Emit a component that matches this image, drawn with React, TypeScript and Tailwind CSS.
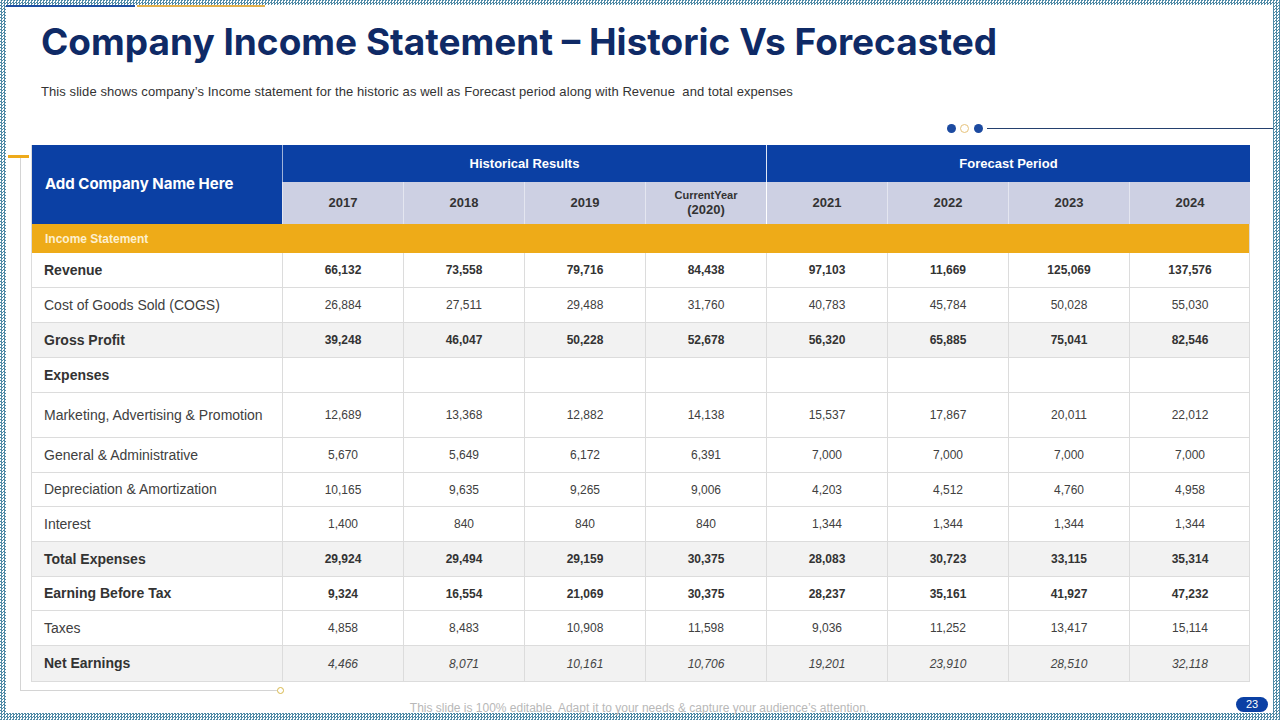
import React from "react";

type Row = { label: string; values: string[]; kind: "bold" | "normal" | "shade" | "empty" | "italic"; h: string };

const rows: Row[] = [
  { label: "Revenue", values: ["66,132", "73,558", "79,716", "84,438", "97,103", "11,669", "125,069", "137,576"], kind: "bold", h: "h-[35px]" },
  { label: "Cost of Goods Sold (COGS)", values: ["26,884", "27,511", "29,488", "31,760", "40,783", "45,784", "50,028", "55,030"], kind: "normal", h: "h-[35px]" },
  { label: "Gross Profit", values: ["39,248", "46,047", "50,228", "52,678", "56,320", "65,885", "75,041", "82,546"], kind: "shade", h: "h-[35px]" },
  { label: "Expenses", values: ["", "", "", "", "", "", "", ""], kind: "empty", h: "h-[35px]" },
  { label: "Marketing, Advertising & Promotion", values: ["12,689", "13,368", "12,882", "14,138", "15,537", "17,867", "20,011", "22,012"], kind: "normal", h: "h-[45px]" },
  { label: "General & Administrative", values: ["5,670", "5,649", "6,172", "6,391", "7,000", "7,000", "7,000", "7,000"], kind: "normal", h: "h-[35px]" },
  { label: "Depreciation & Amortization", values: ["10,165", "9,635", "9,265", "9,006", "4,203", "4,512", "4,760", "4,958"], kind: "normal", h: "h-[34px]" },
  { label: "Interest", values: ["1,400", "840", "840", "840", "1,344", "1,344", "1,344", "1,344"], kind: "normal", h: "h-[35px]" },
  { label: "Total Expenses", values: ["29,924", "29,494", "29,159", "30,375", "28,083", "30,723", "33,115", "35,314"], kind: "shade", h: "h-[35px]" },
  { label: "Earning Before Tax", values: ["9,324", "16,554", "21,069", "30,375", "28,237", "35,161", "41,927", "47,232"], kind: "bold", h: "h-[34px]" },
  { label: "Taxes", values: ["4,858", "8,483", "10,908", "11,598", "9,036", "11,252", "13,417", "15,114"], kind: "normal", h: "h-[35px]" },
  { label: "Net Earnings", values: ["4,466", "8,071", "10,161", "10,706", "19,201", "23,910", "28,510", "32,118"], kind: "italic", h: "h-[35px]" },
];

const years = ["2017", "2018", "2019", "", "2021", "2022", "2023", "2024"];

export default function App() {
  return (
    <div
      className="w-[1280px] h-[720px] overflow-hidden pt-[5px] pl-[6px] pr-[7px] pb-[7px] bg-[repeating-conic-gradient(#4f8aa6_0_25%,#ffffff_0_50%)] bg-size-[3px_3px]"
      style={{ fontFamily: "'Liberation Sans', Arial, sans-serif" }}
    >
      <div className="relative w-full h-full bg-white flex flex-col">
        {/* top lines */}
        <div className="flex h-[2px] gap-[2px]">
          <div className="w-[129px] bg-[#1e4fa3]" />
          <div className="w-[128px] bg-[#e3b04b]" />
        </div>

        {/* title */}
        <h1
          className="pl-[35px] mt-[12px] text-[37px] leading-[46px] font-bold text-[#0f2a66]"
          style={{ fontFamily: "Inter, 'Noto Sans', sans-serif" }}
        >
          Company Income Statement – Historic Vs Forecasted
        </h1>

        {/* subtitle */}
        <p className="pl-[35px] mt-[19px] text-[13px] leading-[15px] tracking-[0.08px] text-[#333333] whitespace-pre">
          This slide shows company’s Income statement for the historic as well as Forecast period along with Revenue  and total expenses
        </p>

        {/* dots */}
        <div className="flex items-center mt-[24px] h-[10px]">
          <div className="ml-[941px] w-[9px] h-[9px] rounded-full bg-[#1c4aa0]" />
          <div className="ml-[4px] w-[9px] h-[9px] rounded-full border border-[#e6c27a] bg-white" />
          <div className="ml-[5px] w-[9px] h-[9px] rounded-full bg-[#1c4aa0]" />
          <div className="ml-[4px] flex-1 h-px bg-[#24406e]" />
        </div>

        {/* table area */}
        <div className="relative mt-[12px] pl-[25px]">
          {/* left decoration */}
          <div className="absolute left-[2px] top-[10px] w-[21px] h-[3px] bg-[#eeaa1a]" />
          <div className="absolute left-[14px] top-[13px] w-px h-[532px] bg-[#d4d4d4]" />
          <div className="absolute left-[14px] top-[545px] w-[257px] h-px bg-[#d4d4d4]" />
          <div className="absolute left-[271px] top-[542px] w-[7px] h-[7px] rounded-full border border-[#d8b84a] bg-white" />

          <div className="w-[1219px] border border-[#dcdcdc] border-t-0">
            {/* header */}
            <div className="grid grid-cols-[250px_repeat(8,121px)] grid-rows-[37px_42px]">
              <div
                className="row-span-2 bg-[#0b40a4] flex items-center pl-[13px] text-white text-[15px] font-bold"
                style={{ fontFamily: "Inter, 'Noto Sans', sans-serif" }}
              >
                Add Company Name Here
              </div>
              <div className="col-span-4 bg-[#0b40a4] border-l border-[#9fb3da] flex items-center justify-center text-white text-[13px] font-bold">
                Historical Results
              </div>
              <div className="col-span-4 bg-[#0b40a4] border-l border-[#dfe6f5] flex items-center justify-center text-white text-[13px] font-bold">
                Forecast Period
              </div>
              {years.map((y, i) => (
                <div
                  key={i}
                  className={`bg-[#cdd0e3] flex flex-col items-center justify-center text-[#333333] border-l ${i === 4 ? "border-[#ffffff]" : "border-[#e4e6f0]"}`}
                >
                  {y ? (
                    <span className="text-[13px] font-bold">{y}</span>
                  ) : (
                    <>
                      <span className="text-[11px] font-bold leading-[13px]">CurrentYear</span>
                      <span className="text-[13px] font-bold leading-[16px]">(2020)</span>
                    </>
                  )}
                </div>
              ))}
            </div>

            {/* income statement band */}
            <div className="h-[29px] bg-[#eeab18] flex items-center pl-[13px] text-[12px] font-bold text-[#fdf0cf]">
              Income Statement
            </div>

            {rows.map((r, ri) => {
              const shaded = r.kind === "shade" || r.kind === "italic";
              const boldLabel = r.kind !== "normal";
              return (
                <div
                  key={ri}
                  className={`grid grid-cols-[250px_repeat(8,121px)] ${r.h} ${shaded ? "bg-[#f2f2f2]" : "bg-white"} ${ri < rows.length - 1 ? "border-b border-[#dcdcdc]" : ""}`}
                >
                  <div
                    className={`flex items-center pl-[12px] ${boldLabel ? "text-[14px] font-bold text-[#333333]" : "text-[14px] text-[#404040]"}`}
                  >
                    {r.label}
                  </div>
                  {r.values.map((v, vi) => (
                    <div
                      key={vi}
                      className={`flex items-center justify-center border-l border-[#dcdcdc] text-[12px] ${
                        r.kind === "italic"
                          ? "italic text-[#444444]"
                          : r.kind === "bold" || r.kind === "shade"
                          ? "font-bold text-[#333333]"
                          : "text-[#404040]"
                      }`}
                    >
                      {v}
                    </div>
                  ))}
                </div>
              );
            })}
          </div>
        </div>

        {/* footer */}
        <div className="absolute left-0 right-0 bottom-[-4px] text-center text-[12px] text-[#b8b8b8]">
          This slide is 100% editable. Adapt it to your needs &amp; capture your audience’s attention.
        </div>
        <div className="absolute right-[5px] bottom-[1px] w-[32px] h-[15px] rounded-full bg-[#0b40a4] text-white text-[11px] leading-[15px] text-center">
          23
        </div>
      </div>
    </div>
  );
}
